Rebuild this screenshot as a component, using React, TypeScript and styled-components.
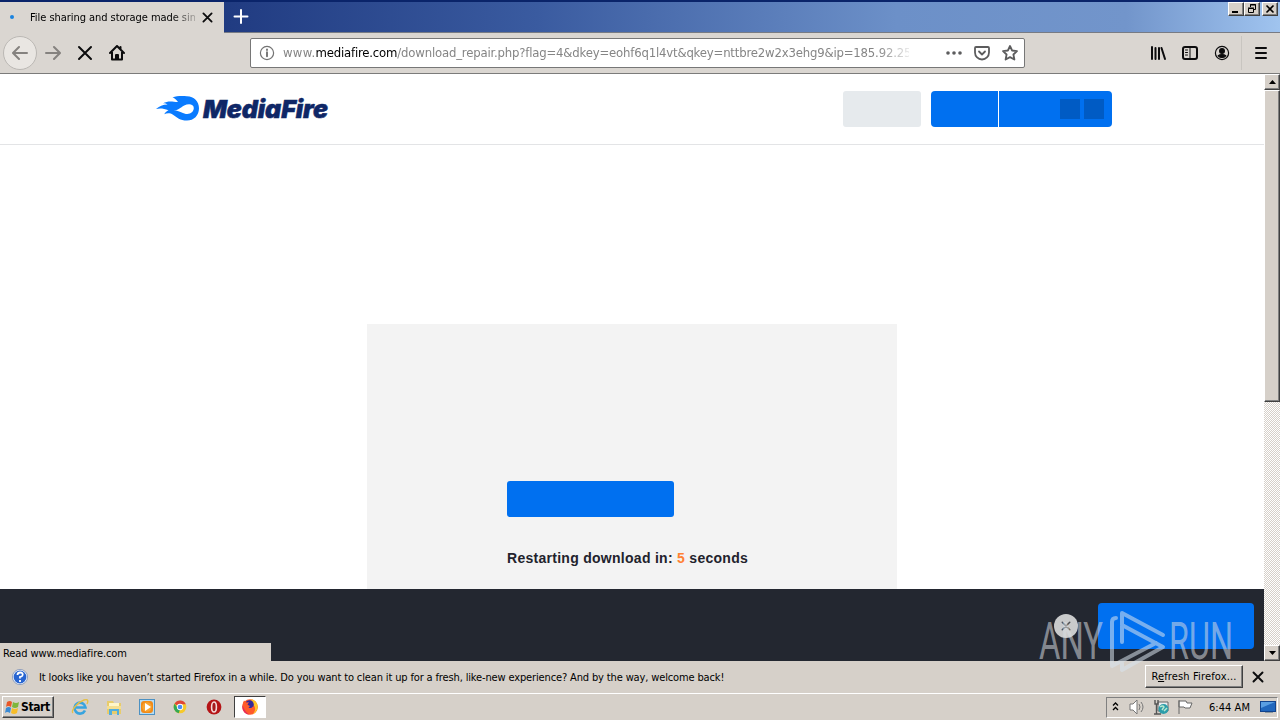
import React, { ReactElement, ReactNode } from 'react';
import styled, { createGlobalStyle, css } from 'styled-components';

const uiFont = "'DejaVu Sans Condensed', 'DejaVu Sans', sans-serif";

const GlobalStyle = createGlobalStyle`
  * {
    box-sizing: border-box;
  }
  body {
    margin: 0;
    overflow: hidden;
    background: #fff;
    font-family: ${uiFont};
    font-size: 11px;
    color: #000;
  }
  svg {
    display: block;
    flex-shrink: 0;
  }
`;

const raised = css`
  border: 1px solid;
  border-color: #fff #404040 #404040 #fff;
  box-shadow: inset -1px -1px 0 #808080;
  background: #d6d0c9;
`;

const Spaced = styled.span<{ $spacing?: number }>`
  letter-spacing: ${({ $spacing = 0 }) => $spacing}px;
  white-space: nowrap;
`;

const Desktop = styled.div`
  width: 1280px;
  height: 720px;
  display: flex;
  flex-direction: column;
  overflow: hidden;
`;

/* Title bar */

const TitleBar = styled.header`
  height: 33px;
  display: flex;
  border-top: 2px solid #0a246a;
  background: linear-gradient(90deg, #0a246a 0, #223d83 19%, #3a5ba0 42%, #6c90c8 70%, #7295cb 88%, #a0c4ef 100%);
`;

const Tab = styled.div`
  width: 224px;
  height: 31px;
  padding: 0 11px 1px 10px;
  display: flex;
  align-items: center;
  background: #dad6d1;
`;

const LoadingDot = styled.i`
  width: 4px;
  height: 4px;
  margin-right: 16px;
  border-radius: 50%;
  background: #1b83df;
`;

const TabTitle = styled.div`
  width: 165px;
  margin-right: 7px;
  overflow: hidden;
  mask-image: linear-gradient(90deg, #000 86%, transparent 104%);
`;

const TitleRest = styled.div`
  flex: 1;
  display: flex;
  align-items: flex-start;
  padding: 7px 2px 0 9px;
  border-bottom: 1px solid #777b84;
`;

const WindowButtons = styled.div`
  display: flex;
  margin: -7px 0 0 auto;
`;

const WindowButton = styled.button<{ $gap?: boolean }>`
  ${raised}
  width: 16px;
  height: 14px;
  padding: 0;
  margin-left: ${({ $gap }) => ($gap ? 2 : 0)}px;
`;

/* Navigation bar */

const NavBar = styled.nav`
  height: 41px;
  display: flex;
  align-items: center;
  padding: 0 11px 0 3px;
  background: #dad6d1;
  border-bottom: 1px solid #7b7b7a;
`;

const BackButton = styled.div`
  width: 34px;
  height: 34px;
  display: grid;
  place-items: center;
  border: 1px solid #bbb8b4;
  border-radius: 50%;
  background: #e9e6e2;
`;

const NavIcons = styled.div`
  display: flex;
  gap: 16px;
  margin-left: 8px;
`;

const AddressBar = styled.div`
  width: 775px;
  height: 30px;
  margin-left: 125px;
  padding: 0 6px 0 8px;
  display: flex;
  align-items: center;
  border: 1px solid #777;
  border-radius: 2px;
  background: #fff;
`;

const Url = styled.div`
  width: 626px;
  margin: 0 37px 0 8px;
  display: flex;
  font-size: 13px;
  line-height: 18px;
  color: #858585;
  mask-image: linear-gradient(90deg, #000 95%, transparent 101%);
`;

const Host = styled(Spaced)`
  color: #000;
`;

const PageActions = styled.div`
  display: flex;
  gap: 12px;
`;

const ToolIcons = styled.div`
  display: flex;
  gap: 16px;
  margin-left: auto;
`;

const MenuSlot = styled.div`
  height: 34px;
  margin-left: 11px;
  padding-left: 11px;
  display: flex;
  align-items: center;
  border-left: 1px solid #c8c5c0;
`;

/* Web page */

const Viewport = styled.div`
  height: 587px;
  display: flex;
`;

const Page = styled.main`
  width: 1264px;
  display: flex;
  flex-direction: column;
  background: #fff;
`;

const SiteHeader = styled.div`
  height: 71px;
  padding: 17px 152px 0 155px;
  display: flex;
  border-bottom: 1px solid #e3e4e6;
`;

const Logo = styled.div`
  display: flex;
  height: 36px;
  gap: 3px;
`;

const LogoText = styled.span`
  font: italic 900 25px/36px Inter, sans-serif;
  letter-spacing: -0.1px;
  color: #0f2766;
  -webkit-text-stroke: 0.5px #0f2766;
`;

const HeaderButtons = styled.div`
  display: flex;
  height: 36px;
  margin-left: auto;
`;

const GreyButton = styled.div`
  width: 78px;
  margin-right: 10px;
  border-radius: 3px;
  background: #e6eaed;
`;

const AuthButtons = styled.div`
  width: 181px;
  display: flex;
  border-radius: 4px;
  overflow: hidden;
  background: #0070f0;
`;

const LoginPart = styled.div`
  width: 68px;
  border-right: 1px solid #fff;
`;

const SignUpPart = styled.div`
  flex: 1;
  display: flex;
  justify-content: flex-end;
  align-items: center;
  gap: 4px;
  padding-right: 8px;
`;

const SocialSquare = styled.i`
  width: 20px;
  height: 20px;
  background: #005bc4;
`;

const DownloadArea = styled.section`
  flex: 1;
  padding: 179px 0 0 367px;
`;

const DownloadPanel = styled.div`
  width: 530px;
  height: 265px;
  padding: 157px 0 0 140px;
  background: #f3f3f3;
`;

const DownloadButton = styled.div`
  width: 167px;
  height: 36px;
  border-radius: 3px;
  background: #0070f0;
`;

const Countdown = styled.p`
  margin: 33px 0 0;
  font: bold 14px/17px 'Liberation Sans', sans-serif;
  letter-spacing: 0.28px;
  color: #22222c;
  white-space: nowrap;

  b {
    color: #ff8133;
  }
`;

const AdBar = styled.div`
  position: relative;
  z-index: 1;
  height: 72px;
  padding: 14px 10px 0 0;
  display: flex;
  justify-content: flex-end;
  background: #232730;
`;

const CloseCircle = styled.div`
  width: 24px;
  height: 24px;
  margin: 11px 20px 0 0;
  display: grid;
  place-items: center;
  border-radius: 50%;
  background: #c9cacb;
`;

const AdButton = styled.div`
  width: 156px;
  height: 46px;
  border-radius: 4px;
  background: #0070f0;
`;

const StatusBubble = styled.div`
  position: absolute;
  left: 0;
  bottom: 0;
  width: 271px;
  height: 18px;
  padding-left: 3px;
  line-height: 21px;
  background: #d6d0c9;
`;

const Watermark = styled.svg`
  position: absolute;
  left: 1035px;
  top: 18px;
  overflow: visible;
`;

const Scrollbar = styled.div`
  width: 16px;
  display: flex;
  flex-direction: column;
  background: repeating-conic-gradient(#d6d0c9 0 25%, #fff 0 50%) 0 0 / 2px 2px;
`;

const ScrollButton = styled.div`
  ${raised}
  height: 16px;
  display: grid;
  place-items: center;
`;

const ScrollThumb = styled.div`
  ${raised}
  height: 312px;
  margin-bottom: auto;
`;

/* Notification and taskbar */

const Notification = styled.div`
  height: 32px;
  padding: 0 16px 0 12px;
  display: flex;
  align-items: center;
  background: #d6d0c9;
`;

const Message = styled(Spaced)`
  margin-left: 11px;
`;

const RefreshButton = styled.button`
  ${raised}
  width: 98px;
  height: 23px;
  margin: 0 9px 2px auto;
  padding: 0;
  font: 11px ${uiFont};
  color: #000;
`;

const Taskbar = styled.footer`
  height: 27px;
  padding: 2px;
  display: flex;
  align-items: center;
  border-top: 1px solid #fff;
  background: #d6d0c9;
`;

const StartButton = styled.button`
  ${raised}
  width: 52px;
  height: 22px;
  padding: 0 0 0 1px;
  display: flex;
  align-items: center;
  font: bold 12px ${uiFont};
  letter-spacing: -0.4px;
  color: #000;
`;

const QuickLaunch = styled.div`
  display: flex;
  align-items: center;
  gap: 16px;
  margin-left: 17px;
`;

const ActiveTask = styled.div`
  width: 32px;
  height: 22px;
  margin-left: 11px;
  display: grid;
  place-items: center;
  border: 1px solid;
  border-color: #404040 #fff #fff #404040;
  background: #fff;
`;

const Tray = styled.div`
  width: 172px;
  height: 21px;
  margin-left: auto;
  padding: 0 1px 0 4px;
  display: flex;
  align-items: center;
  border: 1px solid;
  border-color: #808080 #fff #fff #808080;
`;

const TrayIcons = styled.div`
  display: flex;
  align-items: center;
  gap: 8px;
`;

const Clock = styled(Spaced)`
  margin: 0 10px 0 auto;
`;

interface IconProps {
  children: ReactNode;
  size?: number;
  color?: string;
  weight?: number;
}

const Icon = ({ children, size = 16, color = '#0c0c0d', weight = 2 }: IconProps): ReactElement => (
  <svg
    width={size}
    height={size}
    viewBox="0 0 16 16"
    fill="none"
    stroke={color}
    strokeWidth={weight}
    strokeLinecap="round"
    strokeLinejoin="round"
  >
    {children}
  </svg>
);

const Flame = (): ReactElement => (
  <svg width="45" height="36" viewBox="0 0 45 36">
    <path
      fill="#0a7bff"
      d="M1 18C4 15.500 8 13.500 12.600 13.500C11.200 12.500 9.500 12 8 12.200C13 9.500 17 10.500 23 11C21 8.500 19.500 7 17.500 6.500C22 4.800 27 5 32 5.300C39 5.400 44 10.300 44 17.200C44 24.500 38.800 29.500 32 29.500C25 29.500 22 26.400 18 23.700C14.800 21.500 11.500 22.200 9.300 23.200C10 21.500 11.700 20 13.500 19.200C8.500 17.400 5 17 1 18Z"
    />
    <path fill="#fff" d="M18.500 19.500C23 19.600 25.200 16.700 29.200 14.600C33.500 12.400 38.800 13 38.800 17.100C38.800 21 34.800 23.800 30.800 22.900C26.500 22.100 24.500 19.300 18.500 19.500Z" />
  </svg>
);

const NavigationBar = (): ReactElement => (
  <NavBar>
    <BackButton>
      <Icon color="#85827f">
        <path d="M15 8H1.500M7 2L1 8l6 6" />
      </Icon>
    </BackButton>
    <NavIcons>
      <Icon color="#85827f">
        <path d="M1 8h13.500M9 2l6 6-6 6" />
      </Icon>
      <Icon>
        <path d="M2 2l12 12M14 2L2 14" />
      </Icon>
      <Icon>
        <path d="M1 8l7-7 7 7M3 7v7.500h10V7M11.500 2v2" />
        <path d="M7 14v-4h2v4" />
      </Icon>
    </NavIcons>
    <AddressBar>
      <Icon color="#737373" weight={1.2}>
        <circle cx="8" cy="8" r="6.600" />
        <path d="M8 7.300v4M8 4.400v.6" strokeWidth="1.900" />
      </Icon>
      <Url>
        <Spaced $spacing={0.3}>www.</Spaced>
        <Host $spacing={-0.18}>mediafire.com</Host>
        <Spaced $spacing={-0.18}>/download_repair.php?flag=4&amp;dkey=eohf6q1l4vt&amp;qkey=nttbre2w2x3ehg9&amp;ip=185.92.25</Spaced>
      </Url>
      <PageActions>
        <Icon color="#5c5c5d">
          <g fill="#5c5c5d" stroke="none">
            <circle cx="2" cy="8" r="1.800" />
            <circle cx="8" cy="8" r="1.800" />
            <circle cx="14" cy="8" r="1.800" />
          </g>
        </Icon>
        <Icon color="#5c5c5d" weight={1.8}>
          <path d="M2 2h12q1 0 1 1v4.500a7 7 0 0 1-14 0V3q0-1 1-1zM5 6.500l3 3 3-3" />
        </Icon>
        <Icon color="#5c5c5d" weight={1.8}>
          <path d="M8 1l2.100 4.500 4.900.6-3.600 3.400 1 5L8 12.100l-4.400 2.400 1-5L1 6.100l4.900-.6z" />
        </Icon>
      </PageActions>
    </AddressBar>
    <ToolIcons>
      <Icon>
        <path d="M2 2v12M5.500 3v11M9 3v11M11.500 3l3.500 11" />
      </Icon>
      <Icon>
        <rect x="1" y="2" width="14" height="12" rx="2" />
        <path d="M8 2v12M3.500 5h2M3.500 7.500h2M3.500 10h2" strokeWidth="1" />
      </Icon>
      <Icon weight={1.2}>
        <circle cx="8" cy="8" r="6.600" />
        <circle cx="8" cy="6" r="2.400" fill="#0c0c0d" />
        <path d="M4.200 10.800q1.500-1.300 3.800-1.300t3.800 1.300q-1.500 1.700-3.800 1.700t-3.800-1.700z" fill="#0c0c0d" />
      </Icon>
    </ToolIcons>
    <MenuSlot>
      <Icon>
        <path d="M3 3h10M3 8h10M3 13h10" />
      </Icon>
    </MenuSlot>
  </NavBar>
);

const AnyRunMark = (): ReactElement => (
  <Watermark width="200" height="66" viewBox="0 0 200 66">
    <g fill="#d9dde2" fillOpacity="0.55" fontFamily="Roboto, sans-serif" fontWeight="400" fontSize="51">
      <text x="4" y="52" textLength="64" lengthAdjust="spacingAndGlyphs">ANY</text>
      <text x="134" y="52" textLength="64" lengthAdjust="spacingAndGlyphs">RUN</text>
    </g>
    <path
      fill="none"
      stroke="#d9e3ee"
      strokeOpacity="0.55"
      strokeWidth="4"
      strokeLinecap="round"
      strokeLinejoin="round"
      d="M81 11q-4 0-4 4v44l44-23M87 35V6l41 22M87 18l41 22-41 23v-7"
    />
  </Watermark>
);

const MediaFirePage = (): ReactElement => (
  <Page>
    <SiteHeader>
      <Logo>
        <Flame />
        <LogoText>MediaFire</LogoText>
      </Logo>
      <HeaderButtons>
        <GreyButton />
        <AuthButtons>
          <LoginPart />
          <SignUpPart>
            <SocialSquare />
            <SocialSquare />
          </SignUpPart>
        </AuthButtons>
      </HeaderButtons>
    </SiteHeader>
    <DownloadArea>
      <DownloadPanel>
        <DownloadButton />
        <Countdown>
          Restarting download in: <b>5</b> seconds
        </Countdown>
      </DownloadPanel>
    </DownloadArea>
    <AdBar>
      <CloseCircle>
        <Icon size={10} color="#4d4f53" weight={2.4}>
          <path d="M2 2l12 12M14 2L2 14" />
        </Icon>
      </CloseCircle>
      <AdButton />
      <StatusBubble>
        <Spaced $spacing={-0.08}>Read www.mediafire.com</Spaced>
      </StatusBubble>
      <AnyRunMark />
    </AdBar>
  </Page>
);

const QuickIcons = (): ReactElement => (
  <QuickLaunch>
    <svg width="18" height="18" viewBox="0 0 18 18" fill="none">
      <path d="M14 12.500A5.500 5.500 0 1 1 14.500 9.500H5" stroke="#38a4df" strokeWidth="2.600" />
      <path d="M2 15C-1 13 7 4 13 2c5-1.500 4 2 3 4" stroke="#e5bf45" strokeWidth="1.400" />
    </svg>
    <svg width="18" height="18" viewBox="0 0 18 18">
      <path d="M2 3h6l1 2h7v11H2z" fill="#e8cc6c" />
      <path d="M4 5h10v5H4z" fill="#fff6c9" />
      <path d="M2 8h14v3H2z" fill="#f5df91" />
      <path d="M4 17v-6h10v6h-2v-4H7v4z" fill="#51aede" />
    </svg>
    <svg width="16" height="16" viewBox="0 0 16 16">
      <rect x=".5" y=".5" width="15" height="15" fill="#b6dcf3" stroke="#4d91c2" />
      <rect x="2" y="2" width="12" height="12" rx="3" fill="#f18a18" />
      <circle cx="8" cy="8" r="4.800" fill="#f8a431" />
      <path d="M6 4l6 4-6 4z" fill="#fff" />
    </svg>
    <svg width="18" height="18" viewBox="-1 -1 20 20">
      <circle cx="9" cy="9" r="7" fill="#f6c929" />
      <path d="M9 9L2.900 5.500A7 7 0 0 1 15.500 6H9z" fill="#df4637" />
      <path d="M3 5.500L7 11l2 1-1.500 4A7 7 0 0 1 3 5.500z" fill="#35a853" />
      <circle cx="9" cy="9" r="3.500" fill="#fff" />
      <circle cx="9" cy="9" r="2.600" fill="#4a8ef2" />
    </svg>
    <svg width="18" height="16" viewBox="-1 0 18 16">
      <circle cx="8" cy="8" r="7.400" fill="#b51416" />
      <ellipse cx="8" cy="8" rx="2.400" ry="5" fill="#a51a1c" stroke="#f3d9d9" strokeWidth="1.600" />
    </svg>
  </QuickLaunch>
);

const FirefoxIcon = (): ReactElement => (
  <svg width="18" height="18" viewBox="0 0 18 18">
    <circle cx="9" cy="9" r="7.800" fill="#ff5a2b" />
    <path d="M10 1.300c8 1 9 12 1.500 15 4-4 3-8 0-10z" fill="#ffc629" />
    <circle cx="8.500" cy="6.500" r="4.300" fill="#352a9b" />
    <path d="M3 2.500l2.500 2 2.500-.3-1.500 2.600 2.500 1.200-1.500 1.800c2 .8 4 0 4.500-1.500 1 5-6 7-9 3C1 8.500 1.500 5 3 2.500z" fill="#ff5a2b" />
    <path d="M1.600 7c-1 5 2 9 7 9.800C4.600 14 3 11.500 1.600 7z" fill="#e4295f" />
  </svg>
);

const TrayArea = (): ReactElement => (
  <Tray>
    <TrayIcons>
      <svg width="10" height="12" viewBox="0 0 10 12" fill="none" stroke="#000" strokeWidth="1.300">
        <path d="M2 4.500l2.500-2.500L7 4.500M2 9l2.500-2.500L7 9" />
      </svg>
      <svg width="16" height="16" viewBox="0 0 16 16" fill="#fff" stroke="#777" strokeWidth="1">
        <path d="M1 5h3l4-4v14l-4-4H1z" />
        <path d="M10 5q2 3 0 6M12 3q4 5 0 10" fill="none" />
      </svg>
      <svg width="16" height="16" viewBox="0 0 16 16">
        <path d="M5 3h10v9H5z" fill="#e9edf0" stroke="#666" />
        <path d="M2 1v4h3V1M3.500 5v10M1 15h7" fill="none" stroke="#555" strokeWidth="1.400" />
        <circle cx="10.500" cy="10" r="5" fill="#2c9daa" />
        <path d="M7 8q3-2 4 0l-2 3M11 12l3-3" fill="none" stroke="#b9e9cf" strokeWidth="1.500" />
      </svg>
      <svg width="17" height="16" viewBox="0 0 17 16" fill="#fff" stroke="#666">
        <path d="M2 1v14M2 2h7l1 2h5l-2 5H8L7 8H2z" />
      </svg>
    </TrayIcons>
    <Clock $spacing={0.05}>6:44 AM</Clock>
    <svg width="16" height="16" viewBox="0 0 16 16">
      <rect x=".5" y="2.500" width="15" height="10" fill="#2167bd" stroke="#12438d" />
      <path d="M1 3h14L1 9z" fill="#5a9ee2" />
      <path d="M5 13h8v1H5z" fill="#8d989e" />
    </svg>
  </Tray>
);

export const App = (): ReactElement => (
  <Desktop>
    <GlobalStyle />
    <TitleBar>
      <Tab>
        <LoadingDot />
        <TabTitle>
          <Spaced $spacing={-0.05}>File sharing and storage made simp</Spaced>
        </TabTitle>
        <Icon size={11} weight={2.6}>
          <path d="M2 2l12 12M14 2L2 14" />
        </Icon>
      </Tab>
      <TitleRest>
        <Icon color="#fff">
          <path d="M8 1v13M1.500 7.500h13" />
        </Icon>
        <WindowButtons>
          <WindowButton>
            <svg width="14" height="12" viewBox="0 0 14 12">
              <path d="M3 8h6v2H3z" />
            </svg>
          </WindowButton>
          <WindowButton>
            <svg width="14" height="12" viewBox="0 0 14 12" fill="none" stroke="#000">
              <path d="M5.500 4V1.500h5v5H8M5 2h6M3.500 5.500h5v4h-5zM3 5h6" />
            </svg>
          </WindowButton>
          <WindowButton $gap>
            <svg width="14" height="12" viewBox="0 0 14 12" stroke="#000" strokeWidth="1.600">
              <path d="M3.500 2.500l7 7M10.500 2.500l-7 7" />
            </svg>
          </WindowButton>
        </WindowButtons>
      </TitleRest>
    </TitleBar>
    <NavigationBar />
    <Viewport>
      <MediaFirePage />
      <Scrollbar>
        <ScrollButton>
          <svg width="7" height="4" viewBox="0 0 7 4">
            <path d="M0 4l3.500-4L7 4z" />
          </svg>
        </ScrollButton>
        <ScrollThumb />
        <ScrollButton>
          <svg width="7" height="4" viewBox="0 0 7 4">
            <path d="M0 0h7L3.500 4z" />
          </svg>
        </ScrollButton>
      </Scrollbar>
    </Viewport>
    <Notification>
      <svg width="16" height="16" viewBox="0 0 16 16">
        <circle cx="8" cy="8" r="7" fill="#2865d1" stroke="#edf3fc" strokeWidth="1.200" />
        <circle cx="8" cy="8" r="7.600" fill="none" stroke="#7188b2" strokeWidth=".7" />
        <path d="M5.500 6q0-2.500 2.700-2.500T10.700 6Q10.500 7.500 8 8v1.500M8 11v2" fill="none" stroke="#fff" strokeWidth="1.800" />
      </svg>
      <Message $spacing={-0.14}>
        It looks like you haven’t started Firefox in a while. Do you want to clean it up for a fresh, like-new experience? And by the way, welcome back!
      </Message>
      <RefreshButton>
        <Spaced $spacing={0.15}>
          R<u>e</u>fresh Firefox...
        </Spaced>
      </RefreshButton>
      <Icon size={12} weight={2.6}>
        <path d="M2 2l12 12M14 2L2 14" />
      </Icon>
    </Notification>
    <Taskbar>
      <StartButton>
        <svg width="17" height="16" viewBox="0 0 17 16">
          <path d="M3 3q3-2 5 0L7 8Q4 6 2 8z" fill="#e95728" />
          <path d="M9 3q3 2 6 0l-1 5q-3 2-6 0z" fill="#7fb63c" />
          <path d="M2 9q3-2 5 0l-1 5q-3-2-5 0z" fill="#3a8ad4" />
          <path d="M8 9q3 2 6 0l-1 5q-3 2-6 0z" fill="#f7bd28" />
        </svg>
        Start
      </StartButton>
      <QuickIcons />
      <ActiveTask>
        <FirefoxIcon />
      </ActiveTask>
      <TrayArea />
    </Taskbar>
  </Desktop>
);

export default App;
